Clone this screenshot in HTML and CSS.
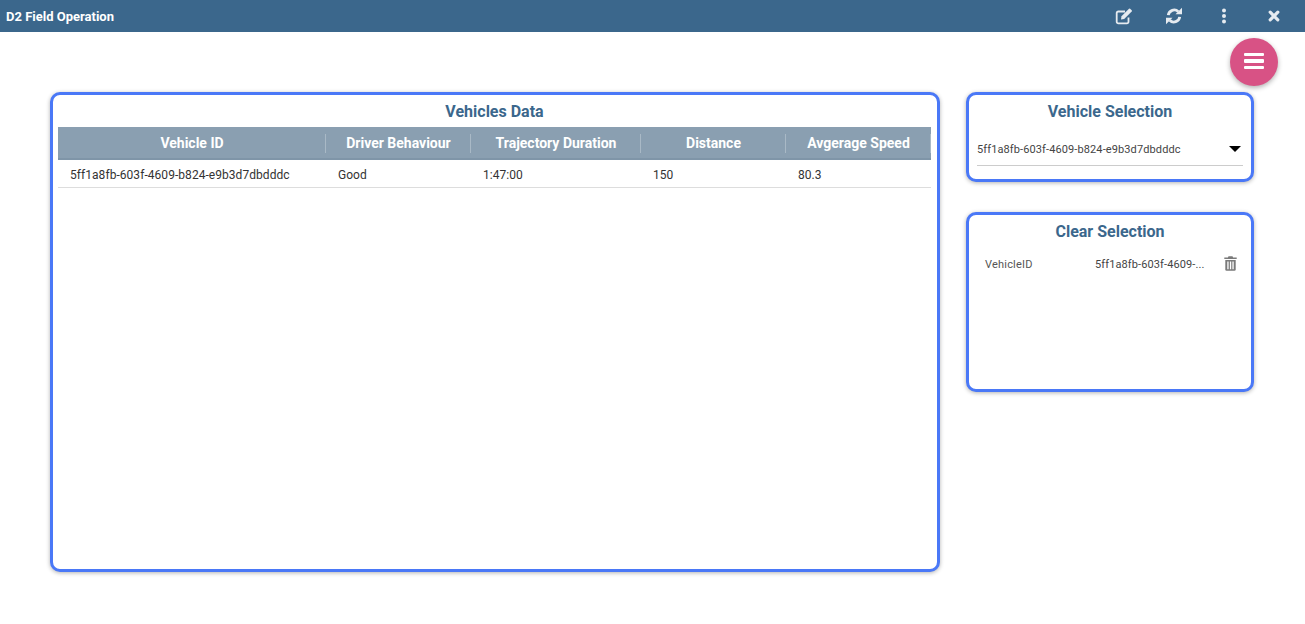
FILE: index.html
```html
<!DOCTYPE html>
<html lang="en">
<head>
  <meta charset="UTF-8">
  <meta name="viewport" content="width=device-width, initial-scale=1.0">
  <title>D2 Field Operation</title>
  <link rel="stylesheet" href="styles.css">
</head>
<body>

<!-- Top bar -->
<header class="topbar">
  <span class="app-title">D2 Field Operation</span>
  <div class="topbar-icons">
    <svg class="top-icon" viewBox="0 0 18 18" aria-label="Edit">
      <path d="M13.500 10.500V14.700a1.600 1.600 0 0 1-1.600 1.600H3.300a1.600 1.600 0 0 1-1.600-1.600V6.100a1.600 1.600 0 0 1 1.600-1.600h6.700" fill="none" stroke="currentColor" stroke-width="1.800"/>
      <path d="M6.500 9.200 14 1.700a.8.8 0 0 1 1.100 0l1.600 1.600a.8.8 0 0 1 0 1.100L9.200 11.900l-3.200.5z" fill="currentColor"/>
    </svg>
    <svg class="top-icon" viewBox="0 0 18 18" aria-label="Refresh">
      <path d="M3.300 8.200A5.900 5.900 0 0 1 13.300 4.700" fill="none" stroke="currentColor" stroke-width="2.800"/>
      <path d="M10.500 7.300h6.500V.8z" fill="currentColor"/>
      <path d="M14.700 9.800A5.900 5.900 0 0 1 4.700 13.300" fill="none" stroke="currentColor" stroke-width="2.800"/>
      <path d="M7.500 10.700H1v6.500z" fill="currentColor"/>
    </svg>
    <svg class="top-icon" viewBox="0 0 18 18" aria-label="More">
      <circle cx="9" cy="3.500" r="2" fill="currentColor"/>
      <circle cx="9" cy="9" r="2" fill="currentColor"/>
      <circle cx="9" cy="14.500" r="2" fill="currentColor"/>
    </svg>
    <svg class="top-icon" viewBox="0 0 18 18" aria-label="Close">
      <path d="M5.200 5.200l7.600 7.600M12.800 5.200l-7.600 7.600" fill="none" stroke="currentColor" stroke-width="3.200" stroke-linecap="round"/>
    </svg>
  </div>
</header>

<!-- Floating menu button -->
<button class="fab" type="button" aria-label="Menu">
  <span class="fab-bar"></span>
  <span class="fab-bar"></span>
  <span class="fab-bar"></span>
</button>

<main class="content">

  <!-- Vehicles table -->
  <section class="panel panel-data">
    <h2 class="panel-title">Vehicles Data</h2>
    <table class="data-table">
      <colgroup>
        <col class="col-id">
        <col class="col-behaviour">
        <col class="col-duration">
        <col class="col-distance">
        <col class="col-speed">
      </colgroup>
      <thead>
        <tr>
          <th>Vehicle ID</th>
          <th>Driver Behaviour</th>
          <th>Trajectory Duration</th>
          <th>Distance</th>
          <th>Avgerage Speed</th>
        </tr>
      </thead>
      <tbody>
        <tr>
          <td>5ff1a8fb-603f-4609-b824-e9b3d7dbdddc</td>
          <td>Good</td>
          <td>1:47:00</td>
          <td>150</td>
          <td>80.3</td>
        </tr>
      </tbody>
    </table>
  </section>

  <div class="side">
    <!-- Vehicle dropdown -->
    <section class="panel panel-select">
      <h2 class="panel-title">Vehicle Selection</h2>
      <div class="select-row">
        <span class="select-value">5ff1a8fb-603f-4609-b824-e9b3d7dbdddc</span>
        <span class="select-arrow"></span>
      </div>
    </section>

    <!-- Current filters -->
    <section class="panel panel-clear">
      <h2 class="panel-title">Clear Selection</h2>
      <div class="filter-row">
        <span class="filter-name">VehicleID</span>
        <span class="filter-value">5ff1a8fb-603f-4609-...</span>
        <svg class="trash-icon" viewBox="0 0 13 15" aria-label="Delete">
          <path d="M4.500 .3h4l.6 1.300H12.700v1.500H.3V1.600h3.600z" fill="currentColor"/>
          <path d="M1.300 4h10.400v9.500a1.300 1.300 0 0 1-1.300 1.300H2.600a1.300 1.300 0 0 1-1.300-1.300z" fill="currentColor"/>
          <path d="M3.300 5.500h1.300v7.800H3.300zM5.900 5.500h1.300v7.800H5.900zM8.400 5.500h1.300v7.800H8.400z" fill="#fff"/>
        </svg>
      </div>
    </section>
  </div>

</main>

</body>
</html>
```

FILE: styles.css
```css
* {
  box-sizing: border-box;
}
body {
  margin: 0;
  height: 624px;
  overflow: hidden;
  background-color: #fff;
  font-family: Roboto, "Liberation Sans", sans-serif;
  color: #333;
}

/* Top bar */
.topbar {
  display: flex;
  align-items: center;
  justify-content: space-between;
  height: 32px;
  padding: 0 0 0 6px;
  background-color: #3b678c;
  color: #fff;
}
.app-title {
  font-size: 13px;
  font-weight: 700;
}
.topbar-icons {
  display: flex;
  align-items: center;
  gap: 32px;
  padding-right: 22px;
}
.top-icon {
  width: 18px;
  height: 18px;
  color: #e6ebf0;
}

/* Floating button */
.fab {
  position: absolute;
  top: 38px;
  left: 1230px;
  display: flex;
  flex-direction: column;
  align-items: center;
  justify-content: center;
  gap: 3px;
  width: 48px;
  height: 48px;
  padding: 0 0 2px;
  border: none;
  border-radius: 50%;
  background-color: #d85285;
  box-shadow: 0 2px 5px rgba(0, 0, 0, 0.3);
}
.fab-bar {
  width: 20px;
  height: 3.500px;
  border-radius: 1px;
  background-color: #fff;
}

/* Panels */
.content {
  display: flex;
  align-items: flex-start;
  gap: 26px;
  padding: 60px 0 0 50px;
}
.panel {
  border: 3px solid #4a78f7;
  border-radius: 10px;
  background-color: #fff;
  box-shadow: 0 1px 4px rgba(0, 0, 0, 0.3);
}
.panel-title {
  height: 32px;
  margin: 0;
  padding-top: 1px;
  font-size: 16px;
  font-weight: 700;
  line-height: 32px;
  text-align: center;
  color: #3b678c;
}
.panel-data {
  width: 890px;
  height: 480px;
  padding: 0 6px 0 5px;
}
.side {
  display: flex;
  flex-direction: column;
  gap: 30px;
  width: 288px;
}
.panel-select {
  height: 90px;
}
.panel-clear {
  height: 180px;
}

/* Table */
.data-table {
  width: 873px;
  border-collapse: collapse;
  table-layout: fixed;
}
.col-id {
  width: 268px;
}
.col-behaviour,
.col-distance,
.col-speed {
  width: 145px;
}
.col-duration {
  width: 170px;
}
.data-table th {
  position: relative;
  height: 32px;
  padding: 0;
  background-color: #8a9fb1;
  border-bottom: 2px solid #7f95a8;
  font-size: 14px;
  font-weight: 700;
  color: #fff;
  text-align: center;
}
.data-table th::after {
  content: "";
  position: absolute;
  top: 7px;
  right: 0;
  width: 1px;
  height: 19px;
  background-color: #a9b9c6;
}
.data-table td {
  height: 28px;
  padding: 4px 12px 0;
  border-bottom: 1px solid #ddd;
  font-size: 12px;
  letter-spacing: 0.05px;
  color: #333;
}

/* Dropdown */
.select-row {
  display: flex;
  align-items: center;
  justify-content: space-between;
  height: 33px;
  margin: 6px 8px 0;
  padding-right: 2px;
  border-bottom: 1px solid #ccc;
}
.select-value {
  font-size: 11px;
  letter-spacing: 0.11px;
  color: #444;
}
.select-arrow {
  width: 0;
  height: 0;
  border-left: 6px solid transparent;
  border-right: 6px solid transparent;
  border-top: 6px solid #000;
}

/* Filter row */
.filter-row {
  display: flex;
  align-items: center;
  height: 20px;
  margin-top: 7px;
  padding: 0 14px 0 16px;
}
.filter-name {
  width: 110px;
  font-size: 11px;
  letter-spacing: 0.2px;
  color: #555;
}
.filter-value {
  width: 108px;
  white-space: nowrap;
  font-size: 11px;
  letter-spacing: 0.11px;
  color: #444;
}
.trash-icon {
  flex-shrink: 0;
  width: 13px;
  height: 15px;
  margin: 0 0 2px 21px;
  color: #7a7a7a;
}
```
